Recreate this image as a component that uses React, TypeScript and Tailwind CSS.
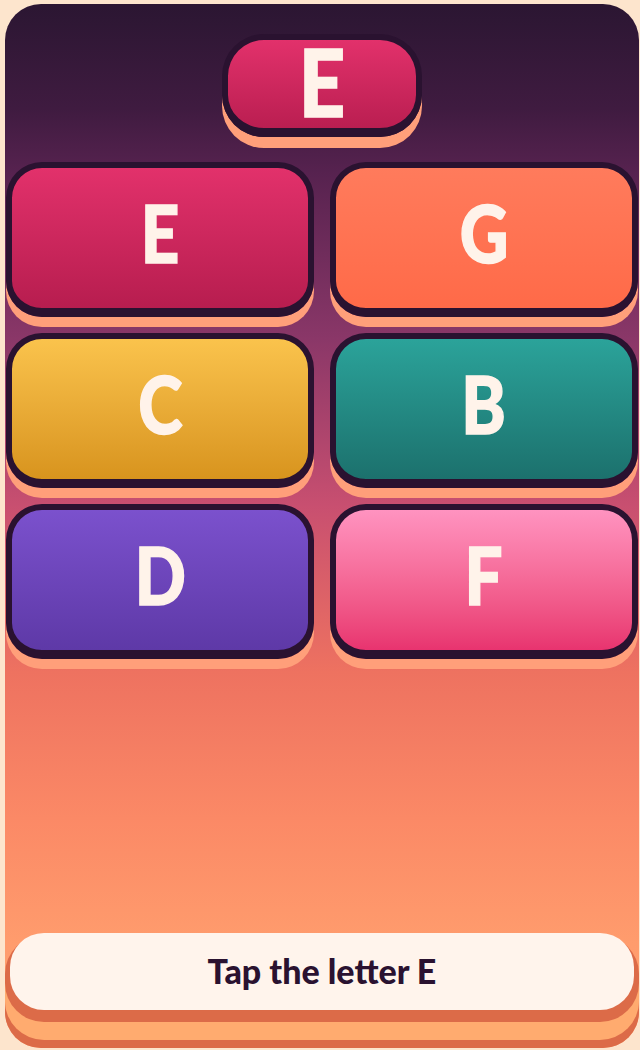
import React from "react";

type Tile = { letter: string; cls: string };

const tiles: Tile[] = [
  { letter: "E", cls: "bg-linear-to-b from-[#e2316b] to-[#b71d4f]" },
  { letter: "G", cls: "bg-linear-to-b from-[#ff7b5c] to-[#ff6a48]" },
  { letter: "C", cls: "bg-linear-to-b from-[#fac34c] to-[#d8941d]" },
  { letter: "B", cls: "bg-linear-to-b from-[#2ba39a] to-[#1c716d]" },
  { letter: "D", cls: "bg-linear-to-b from-[#7b51cd] to-[#5e39a7]" },
  { letter: "F", cls: "bg-linear-to-b from-[#ff93c0] to-[#e8336f]" },
];

export default function App() {
  return (
    <div
      className="w-[640px] h-[1050px] bg-[#fde5cd] pt-[4px] pl-[5px]"
      style={{ fontFamily: "Lato, 'Open Sans', sans-serif" }}
    >
      <div className="w-[634px] h-[1044px] rounded-[36px] overflow-hidden flex flex-col bg-[linear-gradient(180deg,#2b1632_0%,#3f1b40_10%,#56224f_16%,#8a3768_32%,#c84f70_48%,#ee7260_64%,#fb8966_78%,#ff9c6d_90%,#ffa170_100%)]">
        <div className="flex justify-center pt-[30px]">
          <div className="w-[200px] h-[103px] rounded-[42px] border-[6px] border-b-[9px] border-[#2a1230] shadow-[0_11px_0_#ff9f7a] bg-linear-to-b from-[#e2316b] to-[#ba1e51] flex items-center justify-center">
            <span className="inline-block scale-x-[0.86] text-[94px] font-black leading-none text-[#fff3ea] [-webkit-text-stroke:1.5px_#fff3ea] pb-[6px]">
              E
            </span>
          </div>
        </div>

        <div className="mt-[25px] px-[1px] grid grid-cols-2 gap-x-[16px] gap-y-[16px]">
          {tiles.map((t, i) => (
            <div
              key={i}
              className={`h-[155px] rounded-[36px] border-[6px] border-b-[9px] border-[#2a1230] shadow-[0_10px_0_#ff9f7a] flex items-center justify-center ${t.cls}`}
            >
              <span className="inline-block scale-x-[0.84] text-[80px] font-black leading-none text-[#fff3ea] [-webkit-text-stroke:1.5px_#fff3ea] pb-[12px]">
                {t.letter}
              </span>
            </div>
          ))}
        </div>

        <div className="flex-1" />

        <div className="mx-[5px] mb-[38px] h-[77px] rounded-[34px] bg-[#fff4ec] flex items-center justify-center shadow-[0_7px_0_5px_#dc6b48,0_25px_0_5px_#ffab6f,0_42px_0_5px_#dc6b48]">
          <span className="text-[34px] font-black text-[#2a1230] leading-none pb-[2px]">
            Tap the letter E
          </span>
        </div>
      </div>
    </div>
  );
}
